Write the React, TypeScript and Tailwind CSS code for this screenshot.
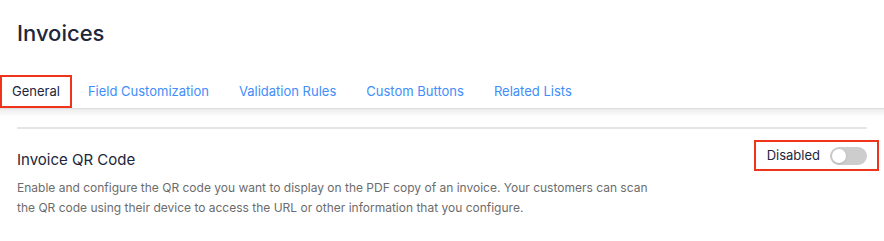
import { useState } from "react";

const tabs = [
  "General",
  "Field Customization",
  "Validation Rules",
  "Custom Buttons",
  "Related Lists",
];

export default function App() {
  const [enabled, setEnabled] = useState(false);

  return (
    <div className="w-[884px] h-[241px] bg-white font-['Inter',sans-serif] text-[#21263c] overflow-hidden">
      <h1 className="pl-[17px] pt-[18px] text-[22px] font-medium leading-[30px]">Invoices</h1>

      <div className="mt-[28px] relative">
        <div className="flex items-end h-[33px] border-b border-[#dddde2]">
          {tabs.map((tab, i) => (
            <button
              key={tab}
              className={
                i === 0
                  ? "h-[33px] px-[10px] text-[13px] text-[#21263c] border-2 border-[#f0341c] mr-[1px]"
                  : "h-[33px] px-[15px] text-[13px] text-[#408dfb]"
              }
            >
              {tab}
            </button>
          ))}
        </div>
        <div className="h-[8px] bg-gradient-to-b from-[#ececec] to-white" />
      </div>

      <div className="px-[17px]">
        <div className="mt-[10px] border-t-2 border-[#e6e6e6]" />

        <div className="flex items-start justify-between mt-[20px]">
          <div>
            <h2 className="text-[15px] leading-[22px] text-[#21263c]">Invoice QR Code</h2>
            <p className="mt-[7px] text-[12px] leading-[20px] text-[#6c6c6c] w-[640px]">
              Enable and configure the QR code you want to display on the PDF copy of an invoice. Your customers can scan the QR code using their device to access the URL or other information that you configure.
            </p>
          </div>
          <div className="flex items-center gap-[10px] -mt-[9px] -mr-[12px] h-[31px] pl-[11px] pr-[10px] border-2 border-[#f0341c]">
            <span className="text-[13px] text-[#21263c]">{enabled ? "Enabled" : "Disabled"}</span>
            <button
              onClick={() => setEnabled(!enabled)}
              className={
                enabled
                  ? "w-[37px] h-[18px] rounded-full bg-[#408dfb] flex items-center justify-end p-[2px]"
                  : "w-[37px] h-[18px] rounded-full bg-[#cdcdcd] flex items-center p-[2px]"
              }
            >
              <span className="w-[14px] h-[14px] rounded-full bg-white shadow-sm" />
            </button>
          </div>
        </div>
      </div>
    </div>
  );
}
